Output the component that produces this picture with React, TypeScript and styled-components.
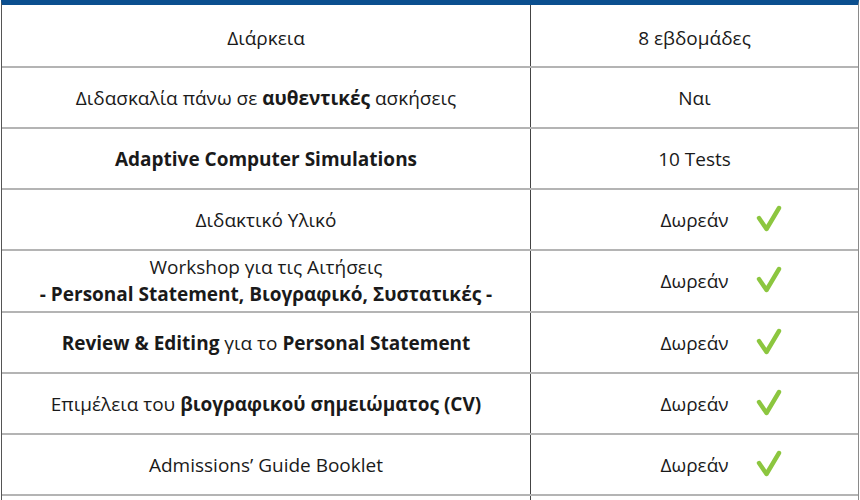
import React from "react";
import styled, { createGlobalStyle } from "styled-components";

const Global = createGlobalStyle`
  html, body { margin: 0; padding: 0; background: #ffffff; }
  body { font-family: "Open Sans", "Noto Sans", sans-serif; color: #1a1a1a; }
`;

const Table = styled.div`
  width: 858px;
  margin-left: 1px;
  border-top: 5px solid #0b4f8f;
  border-left: 1px solid #555;
  border-right: 1px solid #8a8a8a;
  box-sizing: border-box;
`;

const Row = styled.div<{ $h: number }>`
  display: grid;
  grid-template-columns: 529px 1fr;
  height: ${(p) => p.$h}px;
  border-bottom: 2px solid #b4b4b4;
  box-sizing: border-box;
`;

const Cell = styled.div<{ $top?: number; $divider?: boolean }>`
  display: flex;
  flex-direction: column;
  align-items: center;
  justify-content: center;
  text-align: center;
  font-size: 19px;
  line-height: 27px;
  padding-top: ${(p) => p.$top ?? 2}px;
  box-sizing: border-box;
  border-right: ${(p) => (p.$divider ? "1px solid #444" : "none")};
`;

const B = styled.b`
  font-weight: 700;
`;

const Value = styled.span`
  position: relative;
  display: inline-block;
`;

const Check = styled.svg`
  position: absolute;
  left: calc(100% + 27px);
  top: -2px;
  width: 26px;
  height: 28px;
`;

const CheckMark = () => (
  <Check viewBox="0 0 26 28">
    <polyline
      points="3,13 10.5,24 23,3"
      fill="none"
      stroke="#8cc63f"
      strokeWidth="4.4"
      strokeLinecap="round"
      strokeLinejoin="round"
    />
  </Check>
);

type RowData = {
  left: React.ReactNode;
  right: string;
  check?: boolean;
  h: number;
  top?: number;
};

const rows: RowData[] = [
  { left: "Διάρκεια", right: "8 εβδομάδες", h: 63, top: 6 },
  {
    left: (
      <span>
        Διδασκαλία πάνω σε <B>αυθεντικές</B> ασκήσεις
      </span>
    ),
    right: "Ναι",
    h: 61,
  },
  { left: <B>Adaptive Computer Simulations</B>, right: "10 Tests", h: 61 },
  { left: "Διδακτικό Υλικό", right: "Δωρεάν", check: true, h: 61 },
  {
    left: (
      <>
        <span>Workshop για τις Αιτήσεις</span>
        <B>- Personal Statement, Βιογραφικό, Συστατικές -</B>
      </>
    ),
    right: "Δωρεάν",
    check: true,
    h: 62,
    top: 0,
  },
  {
    left: (
      <span>
        <B>Review &amp; Editing</B> για το <B>Personal Statement</B>
      </span>
    ),
    right: "Δωρεάν",
    check: true,
    h: 61,
  },
  {
    left: (
      <span>
        Επιμέλεια του <B>βιογραφικού σημειώματος (CV)</B>
      </span>
    ),
    right: "Δωρεάν",
    check: true,
    h: 61,
  },
  { left: "Admissions’ Guide Booklet", right: "Δωρεάν", check: true, h: 61 },
  { left: "", right: "", h: 40 },
];

export default function App() {
  return (
    <>
      <Global />
      <Table>
        {rows.map((r, i) => (
          <Row key={i} $h={r.h}>
            <Cell $divider $top={r.top}>
              {r.left}
            </Cell>
            <Cell $top={r.top}>
              <Value>
                {r.right}
                {r.check && <CheckMark />}
              </Value>
            </Cell>
          </Row>
        ))}
      </Table>
    </>
  );
}
